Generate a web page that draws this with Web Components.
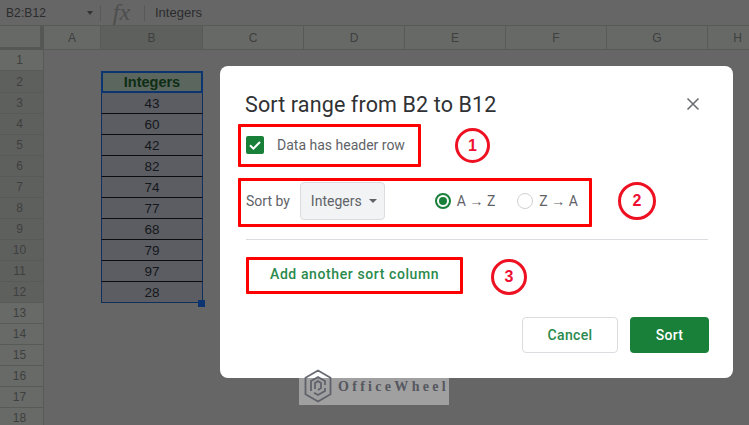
<!DOCTYPE html>
<html><head><meta charset="utf-8"><style>
html,body{margin:0;padding:0;width:749px;height:425px;overflow:hidden;background:#666}
sheet-app{display:block}
</style></head><body>
<sheet-app>
  <formula-bar name="B2:B12" value="Integers"></formula-bar>
  <sheet-grid></sheet-grid>
  <sort-dialog></sort-dialog>
  <water-mark></water-mark>
  <mark-box style="left:238px;top:124px;width:183px;height:43px"></mark-box>
  <mark-box style="left:238px;top:178px;width:354px;height:49px"></mark-box>
  <mark-box style="left:246px;top:257px;width:217px;height:37px"></mark-box>
  <mark-circle style="left:455px;top:128px;width:35px;height:35px">1</mark-circle>
  <mark-circle style="left:618px;top:182px;width:38px;height:38px">2</mark-circle>
  <mark-circle style="left:491px;top:259px;width:36px;height:36px">3</mark-circle>
</sheet-app>
<script>
function def(name, html, init){
  customElements.define(name, class extends HTMLElement{
    constructor(){super();this.attachShadow({mode:'open'}).innerHTML=typeof html==='function'?html(this):html;}
    connectedCallback(){ if(init) init(this); }
  });
}
def('sheet-app',`<style>:host{display:block;position:relative;width:749px;height:425px;overflow:hidden;background:#666;font-family:"Liberation Sans",Arial,sans-serif}</style><slot></slot>`);

def('formula-bar',`<style>
:host{display:flex;align-items:center;height:25px;border-bottom:1px solid #585a58;background:#666;color:#2b2c2e;font:12px "Liberation Sans",Arial,sans-serif}
.name{width:81px;padding-left:6px;letter-spacing:.1px}
.arrow{width:0;height:0;border:3px solid transparent;border-top:4px solid #333;border-bottom:0;margin-right:7px}
.sep{width:1px;height:16px;background:#585a58}
.fx{width:43px;text-align:center;font:italic 24px "Liberation Serif",serif;color:#4d4e4d;box-sizing:border-box;padding-right:2px;line-height:25px}
.val{padding-left:10px;font-size:13px}
</style><div class="name" id="n"></div><div class="arrow"></div><div class="sep"></div><div class="fx">fx</div><div class="sep"></div><div class="val" id="v"></div>`,
el=>{el.shadowRoot.getElementById('n').textContent=el.getAttribute('name');el.shadowRoot.getElementById('v').textContent=el.getAttribute('value');});

const vals=['Integers','43','60','42','82','74','77','68','79','97','28'];
const cols=['A','B','C','D','E','F','G','H'];
const heights=[21,22,21,21,21,21,21,21,21,21,21,21,21,21,21,21,21,21];
def('sheet-grid',()=>{
  let h=`<style>
  :host{display:block;position:relative;height:399px;overflow:hidden;font:12px "Liberation Sans",Arial,sans-serif}
  .g{display:grid;grid-template-columns:44px 57px 102px repeat(5,101px) 60px;grid-template-rows:24px ${heights.map(x=>x+'px').join(' ')};width:max-content}
  .c{box-sizing:border-box;display:flex;align-items:center;justify-content:center;color:#3e3f3e}
  .ch{background:#676967;border-right:1px solid #585a58;border-bottom:1px solid #585a58}
  .ch.on,.rh.on{background:#5e605e}
  .corner{background:#676967;border-right:4px solid #555755;border-bottom:3px solid #555755}
  .rh{background:#686a68;border-right:1px solid #585a58;border-bottom:1px solid #585a58;font-size:12px}
  .e{background:#666}
  .v{background:#5b5d63;color:#16171a;font-size:13.500px;padding-top:1px;border-bottom:1px solid #0b0c0e;border-left:1px solid #0f2f5f;border-right:1px solid #0f2f5f;}
  .h{background:#5a665e;color:#0f2d14;font-weight:bold;font-size:14.500px;border:2px solid #0c3470}
  .last{border-bottom:1px solid #0f2f5f}
  .handle{position:absolute;left:198px;top:274px;width:7px;height:7px;background:#0c3470;border:0}
  </style><div class="g"><div class="c corner"></div>`;
  cols.forEach((c,i)=>h+=`<div class="c ch${i==1?' on':''}">${c}</div>`);
  heights.forEach((_,r)=>{
    const n=r+1, idx=r-1, inR=idx>=0&&idx<vals.length;
    h+=`<div class="c rh${inR?' on':''}" style="padding-right:4px">${n}</div>`;
    cols.forEach((c,i)=>{
      if(i==1&&inR) h+=`<div class="c ${idx==0?'h':'v'}${idx==10?' last':''}">${vals[idx]}</div>`;
      else h+=`<div class="c e"></div>`;
    });
  });
  return h+`</div><div class="handle"></div>`;
});

def('sort-dialog',`<style>
:host{position:absolute;left:220px;top:66px;width:513px;height:312px;box-sizing:border-box;background:#fff;border-radius:8px;padding:24px 25px 25px 25px;display:flex;flex-direction:column;font:14px Roboto,Arial,sans-serif;color:#5f6368}
.top{display:flex;justify-content:space-between;align-items:center;height:28px}
h2{margin:0;font:400 21.5px Roboto,Arial,sans-serif;color:#303134;letter-spacing:.13px;white-space:nowrap}
.x{width:14px;height:14px;display:block;margin-right:8px}
.hdr{display:flex;align-items:center;margin-top:15px;margin-left:1px;height:24px;gap:13px}
.cb{width:18px;height:18px;background:#188038;border-radius:2px;display:flex;align-items:center;justify-content:center}
.sortrow{display:flex;align-items:center;margin-top:25px;margin-left:1px;height:38px}
.dd{margin-left:10px;width:85px;height:38px;box-sizing:border-box;background:#f1f3f4;border:1px solid #dadce0;border-radius:4px;display:flex;align-items:center;padding-left:10px;gap:7px;color:#5f6368}
.tri{width:0;height:0;border:4px solid transparent;border-top:4px solid #5f6368;border-bottom:0}
.r{display:flex;align-items:center;gap:6px;white-space:nowrap}
.ar{font-family:"Liberation Sans",Arial,sans-serif}
.dot{width:16px;height:16px;box-sizing:border-box;border-radius:50%;border:1.5px solid #cfd1d3}
.dot.on{border:2px solid #188038;position:relative}
.dot.on::after{content:"";position:absolute;left:2px;top:2px;width:8px;height:8px;border-radius:50%;background:#188038}
hr{border:0;border-top:1px solid #dadce0;height:0;margin:19px 0 0 1px;width:462px}
.add{margin:26px 0 0 25px;height:17px;line-height:17px;color:#2a8a4c;font-weight:500;letter-spacing:.6px}
.btns{display:flex;justify-content:flex-end;gap:12px;margin-top:34px;margin-right:-1px}
.b{height:36px;box-sizing:border-box;border-radius:4px;display:flex;align-items:center;justify-content:center;font-weight:500;letter-spacing:.32px}
.c{width:96px;border:1px solid #dadce0;color:#2a8a4c;background:#fff}
.s{width:79px;background:#188038;color:#fff}
</style>
<div class="top"><h2>Sort range from B2 to B12</h2>
<svg class="x" viewBox="0 0 14 14" fill="none" stroke="#6b6e71" stroke-width="1.6"><path d="M1.5 1.5l11 11M12.500 1.5l-11 11"/></svg></div>
<div class="hdr"><div class="cb"><svg width="14" height="14" viewBox="0 0 14 14" fill="none" stroke="#fff" stroke-width="2"><path d="M2 7.2l3.4 3.4L12 4"/></svg></div><span>Data has header row</span></div>
<div class="sortrow"><span>Sort by</span><div class="dd">Integers<span class="tri"></span></div>
<div class="r" style="margin-left:50px"><span class="dot on"></span><span>A <span class="ar">→</span> Z</span></div>
<div class="r" style="margin-left:22px"><span class="dot"></span><span>Z <span class="ar">→</span> A</span></div></div>
<hr>
<div class="add">Add another sort column</div>
<div class="btns"><div class="b c">Cancel</div><div class="b s">Sort</div></div>`);

def('mark-box',`<style>:host{position:absolute;box-sizing:border-box;border:3px solid #fe0000;border-radius:1px;display:block}</style>`);
def('mark-circle',`<style>:host{position:absolute;box-sizing:border-box;border:3px solid #ee1122;border-radius:50%;display:flex;align-items:center;justify-content:center;color:#ee1133;font:bold 16px "Liberation Sans",Arial,sans-serif}</style><slot></slot>`);

def('water-mark',`<style>:host{position:absolute;left:299px;top:367px;width:150px;height:38px;background:rgba(255,255,255,.38);display:flex;align-items:center;gap:6px;padding-left:5px;box-sizing:border-box}
span{font:bold 14px "Liberation Serif",serif;letter-spacing:3.3px;color:#55575f;white-space:nowrap;margin-top:2px}</style>
<svg width="28" height="34" viewBox="0 0 28 34" fill="none" stroke="#5a5c66" stroke-width="1.8" style="margin-top:-1px;opacity:.9"><path d="M14 1.500l12.500 7.200v16.600L14 32.500 1.500 25.300V8.700zM7 22V12l7-4 7 4v4M21 19v3l-7 4-4-2.300M11 20v-6l3-2 3 2v5l-3 2"/></svg><span>OfficeWheel</span>`);
</script>
</body></html>
